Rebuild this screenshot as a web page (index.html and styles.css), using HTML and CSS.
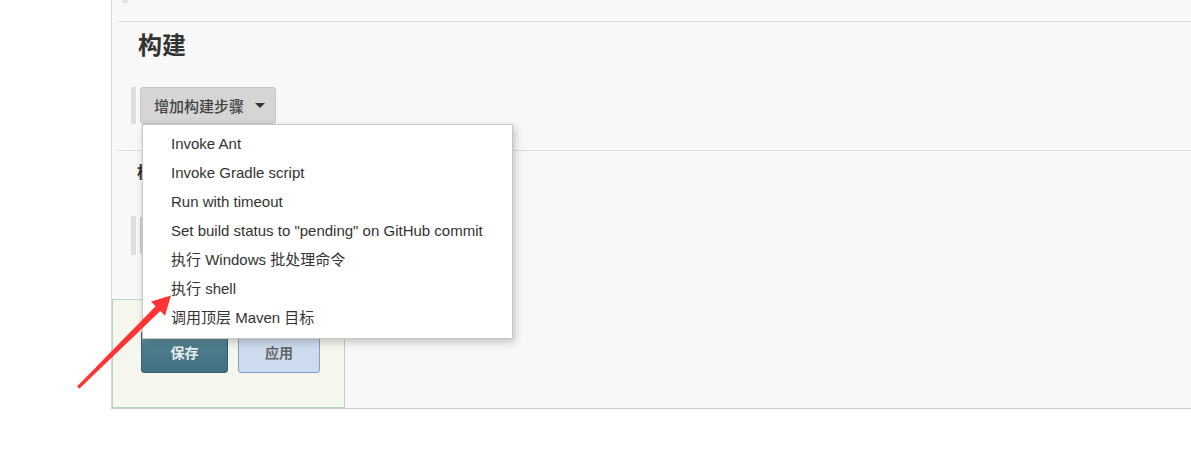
FILE: index.html
```html
<!DOCTYPE html>
<html lang="zh-CN">
<head>
<meta charset="utf-8">
<title>构建</title>
<link rel="stylesheet" href="styles.css">
</head>
<body>
<div class="page">
  <div class="panel">
    <div class="top-strip"><span class="stub"></span></div>
    <section class="section first">
      <h2 class="section-title">构建</h2>
      <div class="add-row">
        <span class="add-bar"></span>
        <button class="add-btn" type="button">增加构建步骤 <span class="caret"></span></button>
      </div>
    </section>
    <section class="section second">
      <h3 class="sub-title">构建后操作</h3>
      <div class="add-row">
        <span class="add-bar tall"></span>
        <button class="add-btn tall" type="button">增加构建后操作步骤 <span class="caret"></span></button>
      </div>
    </section>
    <div class="save-bar">
      <button class="btn save" type="button">保存</button>
      <button class="btn apply" type="button">应用</button>
    </div>
  </div>

  <ul class="menu">
    <li>Invoke Ant</li>
    <li>Invoke Gradle script</li>
    <li>Run with timeout</li>
    <li>Set build status to "pending" on GitHub commit</li>
    <li>执行 Windows 批处理命令</li>
    <li>执行 shell</li>
    <li>调用顶层 Maven 目标</li>
  </ul>

  <svg class="arrow" width="1191" height="453" viewBox="0 0 1191 453" aria-hidden="true">
    <polygon fill="#f33" points="77,386.5 155.6,306.3 151,301.5 171,295.5 165,315.8 160.3,311 79.5,388.5"/>
  </svg>
</div>
</body>
</html>
```

FILE: styles.css
```css
* { box-sizing: border-box; }
html, body { margin: 0; padding: 0; background: #fff; }
body {
  font-family: "Liberation Sans", "Noto Sans CJK SC", sans-serif;
  color: #333;
  font-size: 14px;
  width: 1191px;
  height: 453px;
  overflow: hidden;
}
.page { position: relative; width: 1191px; height: 453px; }

.panel {
  margin-left: 111px;
  width: 1080px;
  height: 409px;
  background: #f8f8f8;
  border-left: 1px solid #d6d6d6;
  border-bottom: 1px solid #cbcbcb;
  display: flex;
  flex-direction: column;
}

.top-strip {
  margin-left: 6px;
  height: 22px;
  border-bottom: 1px solid #dcdcdc;
  padding-left: 4px;
}
.stub { display: block; width: 6px; height: 3px; background: #e4e4e4; }

.section { margin-left: 6px; padding-left: 13px; }
.section.first { padding-top: 9px; padding-bottom: 26px; border-bottom: 1px solid #dcdcdc; }
.section.second { padding-top: 12px; }

.section-title {
  margin: 0 0 26px 7px;
  font-size: 24px;
  line-height: 30px;
  font-weight: bold;
  color: #333;
}
.sub-title {
  margin: 0 0 33px 6px;
  font-size: 16px;
  line-height: 20px;
  font-weight: bold;
  color: #333;
}

.add-row { display: flex; align-items: stretch; gap: 4px; }
.add-bar { width: 5px; height: 37px; background: #dedede; }
.add-bar.tall { height: 39px; }
.add-btn {
  height: 37px;
  padding: 0 10px 0 13px;
  background: #d5d5d5;
  border: 1px solid #c4c4c4;
  border-radius: 3px;
  color: #444;
  font-family: "Liberation Sans", "Noto Sans CJK SC", sans-serif;
  font-size: 15px;
  font-weight: 500;
  display: flex;
  align-items: center;
  gap: 8px;
}
.add-btn.tall { height: 39px; }
.caret {
  width: 0; height: 0;
  border-left: 5px solid transparent;
  border-right: 5px solid transparent;
  border-top: 5px solid #333;
  margin-left: 3px;
}

.save-bar {
  margin-top: auto;
  width: 233px;
  height: 109px;
  background: #f5f6ee;
  border: 1px solid #b4d6c2;
  padding: 30px 0 0 28px;
  display: flex;
  gap: 10px;
  align-items: flex-start;
}
.btn {
  height: 43px;
  border-radius: 3px;
  font-family: "Liberation Sans", "Noto Sans CJK SC", sans-serif;
  font-size: 14px;
  font-weight: bold;
  padding: 0;
}
.btn.save {
  width: 87px;
  color: #e9eef0;
  background: linear-gradient(#7aa3b0 0%, #4d7d8c 35%, #427181 100%);
  border: 1px solid #355f6d;
}
.btn.apply {
  width: 82px;
  color: #666;
  background: #ccdcee;
  border: 1px solid #7ea0cf;
}

.menu {
  position: absolute;
  left: 142px;
  top: 124px;
  width: 371px;
  margin: 0;
  padding: 4px 0 6px;
  list-style: none;
  background: #fff;
  border: 1px solid #c6c6c6;
  box-shadow: 2px 3px 8px rgba(0, 0, 0, 0.22);
}
.menu li {
  height: 29px;
  line-height: 29px;
  padding-left: 28px;
  font-size: 15px;
  color: #333;
  white-space: nowrap;
}

.arrow { position: absolute; left: 0; top: 0; pointer-events: none; }
```
